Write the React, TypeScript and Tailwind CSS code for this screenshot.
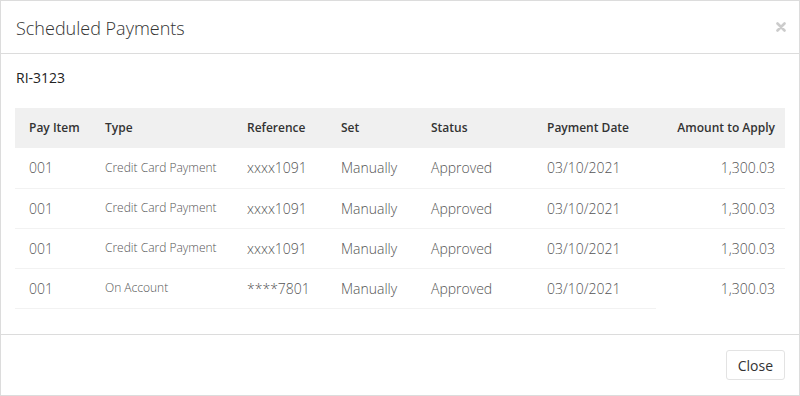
const rows = [
  { item: "001", type: "Credit Card Payment", ref: "xxxx1091", set: "Manually", status: "Approved", date: "03/10/2021", amount: "1,300.03" },
  { item: "001", type: "Credit Card Payment", ref: "xxxx1091", set: "Manually", status: "Approved", date: "03/10/2021", amount: "1,300.03" },
  { item: "001", type: "Credit Card Payment", ref: "xxxx1091", set: "Manually", status: "Approved", date: "03/10/2021", amount: "1,300.03" },
  { item: "001", type: "On Account", ref: "****7801", set: "Manually", status: "Approved", date: "03/10/2021", amount: "1,300.03" },
];

export default function App() {
  return (
    <div
      className="w-[800px] h-[396px] bg-white flex flex-col border border-[#dcdcdc] text-[#333]"
      style={{ fontFamily: '"Open Sans", "Noto Sans", sans-serif' }}
    >
      <div className="h-[53px] shrink-0 flex items-center justify-between pl-[15px] pr-[13px] border-b border-[#dcdcdc]">
        <h2 className="text-[18px] font-light text-[#333] pt-[2px]">Scheduled Payments</h2>
        {/* close cross */}
        <svg width="10" height="10" viewBox="0 0 10 10" className="mb-[1px]">
          <path d="M1.5 1.5 L8.5 8.5 M8.5 1.5 L1.5 8.5" stroke="#cccccc" strokeWidth="2.6" strokeLinecap="round" />
        </svg>
      </div>

      <div className="flex-1 px-[14px] pt-[14px]">
        <p className="text-[14px] text-[#222] leading-[20px] mb-[20px] ml-[1px]">RI-3123</p>
        <table className="w-[770px] border-collapse table-fixed">
          <colgroup>
            <col className="w-[76px]" />
            <col className="w-[142px]" />
            <col className="w-[94px]" />
            <col className="w-[90px]" />
            <col className="w-[116px]" />
            <col className="w-[123px]" />
            <col className="w-[129px]" />
          </colgroup>
          <thead>
            <tr className="bg-[#f0f0f0] h-[40px] text-[12px] font-semibold text-[#333]">
              <th className="text-left pl-[14px] font-semibold">Pay Item</th>
              <th className="text-left pl-[14px] font-semibold">Type</th>
              <th className="text-left pl-[14px] font-semibold">Reference</th>
              <th className="text-left pl-[14px] font-semibold">Set</th>
              <th className="text-left pl-[14px] font-semibold">Status</th>
              <th className="text-left pl-[14px] font-semibold">Payment Date</th>
              <th className="text-right pr-[10px] font-semibold">Amount to Apply</th>
            </tr>
          </thead>
          <tbody>
            {rows.map((r, i) => {
              const last = i === rows.length - 1;
              const cell = "border-b border-[#f2f2f2]";
              return (
                <tr key={i} className="h-[40px] text-[14px] font-light text-[#555]">
                  <td className={`pl-[14px] ${cell}`}>{r.item}</td>
                  <td className={`pl-[14px] text-[12px] ${cell}`}>{r.type}</td>
                  <td className={`pl-[14px] ${cell}`}>{r.ref}</td>
                  <td className={`pl-[14px] ${cell}`}>{r.set}</td>
                  <td className={`pl-[14px] ${cell}`}>{r.status}</td>
                  <td className={`pl-[14px] ${cell}`}>{r.date}</td>
                  <td className={`text-right pr-[10px] ${last ? "" : cell}`}>{r.amount}</td>
                </tr>
              );
            })}
          </tbody>
        </table>
      </div>

      <div className="h-[61px] shrink-0 border-t border-[#dcdcdc] flex items-center justify-end pr-[14px]">
        <button className="h-[30px] px-[11px] text-[14px] text-[#333] bg-white border border-[#e3e3e3] rounded-[3px]">
          Close
        </button>
      </div>
    </div>
  );
}
